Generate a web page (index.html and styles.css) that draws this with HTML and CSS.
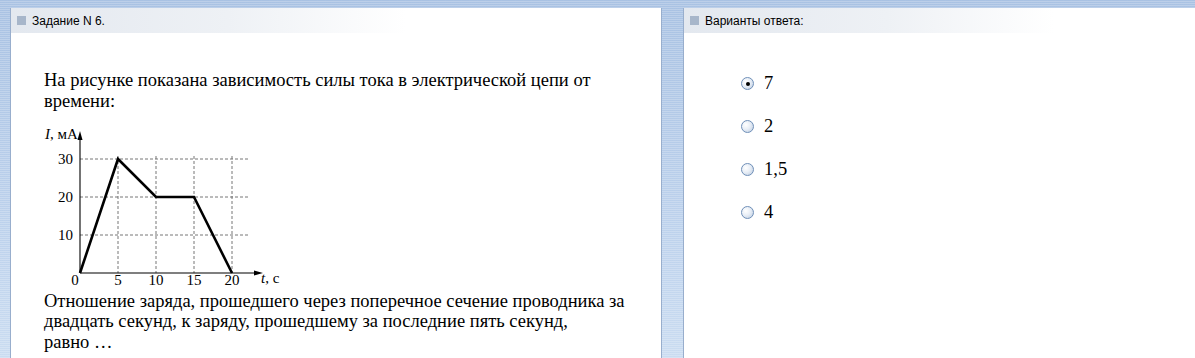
FILE: index.html
```html
<!DOCTYPE html>
<html lang="ru">
<head>
    <meta charset="UTF-8">
    <title>Задание N 6</title>
    <link rel="stylesheet" href="styles.css">
</head>
<body>
    <div class="page">
        <div class="panel task">
            <div class="panel-head"><span class="mark"></span>Задание N 6.</div>
            <div class="task-body">
                <p class="q">На рисунке показана зависимость силы тока в электрической цепи от времени:</p>
                <svg class="graph" width="240" height="166" viewBox="0 0 240 166">
                    <g class="grid">
                        <line x1="36" y1="36" x2="204" y2="36"/>
                        <line x1="36" y1="74" x2="204" y2="74"/>
                        <line x1="36" y1="112" x2="204" y2="112"/>
                        <line x1="74" y1="33" x2="74" y2="150"/>
                        <line x1="112" y1="33" x2="112" y2="150"/>
                        <line x1="150" y1="33" x2="150" y2="150"/>
                        <line x1="188" y1="33" x2="188" y2="150"/>
                    </g>
                    <g class="axis">
                        <line x1="36" y1="150" x2="36" y2="12"/>
                        <line x1="36" y1="150" x2="214" y2="150"/>
                        <path d="M36 8 L33.5 17 L38.5 17 Z"/>
                        <path d="M219 150 L210 147.5 L210 152.5 Z"/>
                    </g>
                    <polyline class="curve" points="36,150 74,36 112,74 150,74 188,150"/>
                    <g class="lbl">
                        <text x="1" y="16"><tspan font-style="italic">I</tspan>, мА</text>
                        <text x="29" y="41" text-anchor="end">30</text>
                        <text x="29" y="79" text-anchor="end">20</text>
                        <text x="29" y="117" text-anchor="end">10</text>
                        <text x="31" y="162" text-anchor="middle">0</text>
                        <text x="74" y="162" text-anchor="middle">5</text>
                        <text x="112" y="162" text-anchor="middle">10</text>
                        <text x="150" y="162" text-anchor="middle">15</text>
                        <text x="188" y="162" text-anchor="middle">20</text>
                        <text x="217" y="160"><tspan font-style="italic">t</tspan>, c</text>
                    </g>
                </svg>
                <p class="q">Отношение заряда, прошедшего через поперечное сечение проводника за двадцать секунд, к заряду, прошедшему за последние пять секунд, равно&nbsp;…</p>
            </div>
        </div>
        <div class="panel answers">
            <div class="panel-head"><span class="mark"></span>Варианты ответа:</div>
            <ul class="options">
                <li><input type="radio" name="ans" checked><span>7</span></li>
                <li><input type="radio" name="ans"><span>2</span></li>
                <li><input type="radio" name="ans"><span>1,5</span></li>
                <li><input type="radio" name="ans"><span>4</span></li>
            </ul>
        </div>
    </div>
</body>
</html>
```

FILE: styles.css
```css
* {
    margin: 0;
    padding: 0;
    box-sizing: border-box;
}

body {
    font-family: 'Liberation Serif', 'Times New Roman', serif;
    color: #000;
    background:
        repeating-linear-gradient(to bottom, rgba(255,255,255,0) 0 1px, rgba(255,255,255,0.22) 1px 2px),
        linear-gradient(to bottom, #a9c2e3 0%, #bcd1ec 60%, #cadcf1 100%);
    height: 358px;
    overflow: hidden;
}

.page {
    display: flex;
    padding: 8px 0 0 10px;
    height: 100%;
}

.panel {
    background: #fff;
    border-left: 1px solid #98aecd;
    border-right: 1px solid #98aecd;
    min-height: 400px;
}

.task {
    width: 652px;
    margin-right: 21px;
}

.answers {
    flex: 1;
    border-right: none;
}

.panel-head {
    display: flex;
    align-items: center;
    height: 25px;
    padding-left: 6px;
    font-family: 'Liberation Sans', Arial, sans-serif;
    font-size: 12px;
    background: linear-gradient(to right, #e3e8ef 0%, #eef1f5 55%, #fff 100%);
}

.task .panel-head {
    width: 395px;
}

.answers .panel-head {
    width: 370px;
}

.mark {
    width: 9px;
    height: 9px;
    margin-right: 6px;
    background: #a7b6ca;
}

.task-body {
    padding: 37px 32px 0 33px;
}

.q {
    font-size: 18.5px;
    line-height: 20.8px;
}

.graph {
    display: block;
    margin: 11px 0 2px 0;
}

.grid line {
    stroke: #666;
    stroke-width: 0.9;
    stroke-dasharray: 3 2;
}

.axis line {
    stroke: #000;
    stroke-width: 1.1;
}

.axis path {
    fill: #000;
}

.curve {
    fill: none;
    stroke: #000;
    stroke-width: 2.6;
    stroke-linejoin: miter;
}

.lbl text {
    font-family: 'Liberation Serif', 'Times New Roman', serif;
    font-size: 15px;
    fill: #000;
}

.options {
    list-style: none;
    padding: 29px 0 0 57px;
}

.options li {
    display: flex;
    align-items: center;
    height: 43px;
    font-size: 18.5px;
}

.options input {
    appearance: none;
    width: 13px;
    height: 13px;
    margin-right: 10px;
    border: 1px solid #6f8fb8;
    border-radius: 50%;
    background: radial-gradient(circle at 35% 35%, #fff 0%, #e8eef6 45%, #b9c9de 100%);
    display: grid;
    place-items: center;
}

.options input:checked::after {
    content: "";
    width: 4px;
    height: 4px;
    border-radius: 50%;
    background: #000;
}
```
